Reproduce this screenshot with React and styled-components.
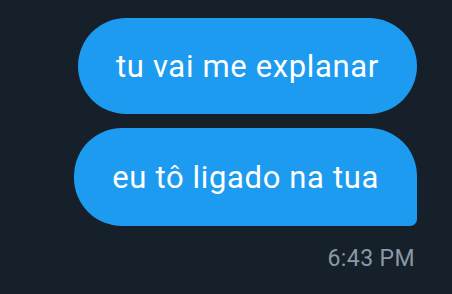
import React from "react";
import styled, { createGlobalStyle } from "styled-components";

const Global = createGlobalStyle`
  html, body { margin: 0; padding: 0; background: #15202b; }
  body { font-family: Roboto, "Liberation Sans", sans-serif; }
`;

const Page = styled.div`
  width: 452px;
  height: 294px;
  background: #15202b;
  box-sizing: border-box;
  padding: 18px 35px 0 0;
  display: flex;
  flex-direction: column;
  align-items: flex-end;
`;

const Bubble = styled.div`
  background: #1d9bf0;
  color: #ffffff;
  font-size: 31px;
  letter-spacing: 0.65px;
  height: ${(p) => p.$h}px;
  padding: 0 ${(p) => p.$pad}px;
  display: flex;
  align-items: center;
  border-radius: ${(p) => (p.$tail ? "48px 48px 7px 48px" : "48px")};
  margin-bottom: 14px;
  white-space: nowrap;
`;

const Time = styled.div`
  color: #8b98a5;
  font-size: 23px;
  letter-spacing: 0.4px;
  margin-top: 5px;
  padding-right: 2px;
`;

export default function App() {
  return (
    <>
      <Global />
      <Page>
        <Bubble $h={96} $pad={38}>tu vai me explanar</Bubble>
        <Bubble $h={98} $pad={38} $tail>eu tô ligado na tua</Bubble>
        <Time>6:43 PM</Time>
      </Page>
    </>
  );
}
